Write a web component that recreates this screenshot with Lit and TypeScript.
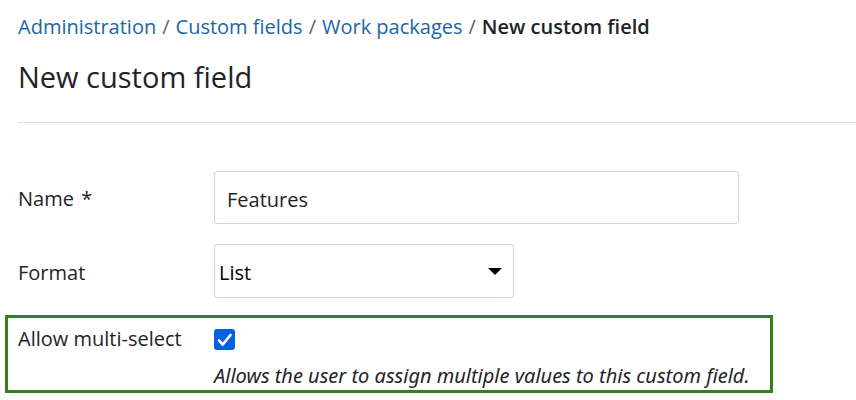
import { LitElement, html, css } from "lit";
import { customElement } from "lit/decorators.js";

@customElement("app-root")
export class AppRoot extends LitElement {
  static styles = css`
    :host {
      display: block;
      background: #fff;
      color: #1f2328;
      font-family: "Open Sans", "Noto Sans", sans-serif;
      font-size: 20px;
      line-height: 28px;
    }
    * { box-sizing: border-box; }
    .page { padding: 13px 0 0 18px; }
    .crumbs ol {
      display: flex;
      margin: 0;
      padding: 0;
      list-style: none;
      white-space: nowrap;
    }
    .crumbs a { color: #1a67a3; text-decoration: none; }
    .crumbs li + li::before { content: "/"; margin: 0 6px; font-weight: 400; color: #59636e; }
    .current { font-weight: 600; }
    h1 {
      margin: 15px 0 0;
      padding-bottom: 24px;
      border-bottom: 1px solid #e0e0e0;
      font-size: 29px;
      line-height: 42px;
      font-weight: 400;
    }
    form { padding-top: 48px; }
    .row { display: grid; grid-template-columns: 196px 1fr; align-items: center; margin-bottom: 20px; white-space: nowrap; }
    .field { padding-top: 3px; }
    .text, .pick {
      font: inherit;
      color: #1f2328;
      border: 1px solid #ccd6de;
      border-radius: 3px;
      background: #fff;
    }
    .text { width: 100%; max-width: 525px; height: 53px; padding: 3px 12px 0; }
    .mark { margin-left: 2px; }
    .pickbox { display: grid; width: 300px; align-items: center; }
    .pick { appearance: none; grid-area: 1 / 1; width: 100%; height: 54px; padding: 3px 4px 0; color: #000; }
    .arrow { grid-area: 1 / 1; justify-self: end; margin-right: 12px; pointer-events: none; }
    .marked {
      width: 768px;
      max-width: 100%;
      margin: -3px 0 0 -13px;
      padding: 7px 7px 0 10px;
      border: 3px solid #377d22;
    }
    .marked .row { margin: 0; row-gap: 9px; }
    .check { display: grid; width: 21px; height: 21px; }
    .check input { appearance: none; grid-area: 1 / 1; margin: 0; border-radius: 3px; border: 2px solid #767676; }
    .check input:checked { background: #0060df; border-color: #0060df; }
    .check svg { grid-area: 1 / 1; pointer-events: none; }
    .check input:not(:checked) + svg { display: none; }
    .hint { grid-column: 2; font-family: "Noto Sans", "Open Sans", sans-serif; font-style: italic; }
  `;

  render() {
    return html`
      <main class="page">
        <nav class="crumbs" aria-label="Breadcrumb">
          <ol>
            <li><a href="#admin">Administration</a></li>
            <li><a href="#fields">Custom fields</a></li>
            <li><a href="#packages">Work packages</a></li>
            <li class="current" aria-current="page">New custom field</li>
          </ol>
        </nav>
        <h1>New custom field</h1>
        <form>
          <div class="row">
            <label class="field" for="name">Name <span class="mark">*</span></label>
            <input class="text" id="name" type="text" required value="Features" />
          </div>
          <div class="row">
            <label class="field" for="format">Format</label>
            <div class="pickbox">
              <select class="pick" id="format"><option>List</option></select>
              <svg class="arrow" width="14" height="7" viewBox="0 0 14 7" aria-hidden="true"><path d="M0 0h14L7 7z" /></svg>
            </div>
          </div>
          <div class="marked">
            <div class="row">
              <label for="multi">Allow multi-select</label>
              <span class="check">
                <input id="multi" type="checkbox" checked aria-describedby="hint" />
                <svg viewBox="0 0 21 21" aria-hidden="true"><path d="M5 11.5l3.8 4L16.5 6" fill="none" stroke="#fff" stroke-width="2.7" stroke-linecap="round" stroke-linejoin="round" /></svg>
              </span>
              <span class="hint" id="hint">Allows the user to assign multiple values to this custom field.</span>
            </div>
          </div>
        </form>
      </main>
    `;
  }
}
